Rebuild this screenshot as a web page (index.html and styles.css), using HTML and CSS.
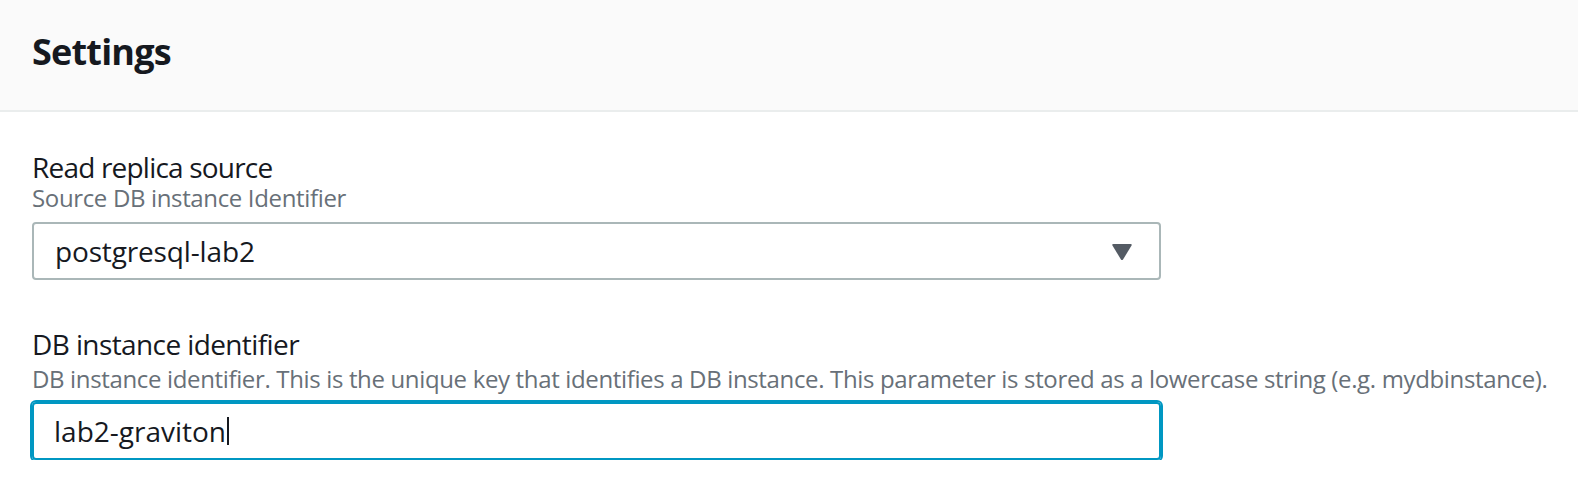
FILE: index.html
```html
<!DOCTYPE html>
<html lang="en">
<head>
<meta charset="utf-8">
<title>Settings</title>
<link rel="stylesheet" href="styles.css">
</head>
<body>
<section class="panel">
  <header class="panel-header">
    <h2 class="panel-title">Settings</h2>
  </header>
  <div class="panel-body">
    <div class="field field-first">
      <label class="field-label">Read replica source</label>
      <div class="field-desc">Source DB instance Identifier</div>
      <div class="select">
        <span class="select-value">postgresql-lab2</span>
        <svg class="caret" width="22" height="18" viewBox="0 0 22 18" aria-hidden="true">
          <path d="M2.5 1 H19.5 Q21.5 1 20.4 2.8 L12.2 16.2 Q11 18 9.8 16.2 L1.6 2.8 Q0.5 1 2.5 1 Z" fill="#545b64"/>
        </svg>
      </div>
    </div>
    <div class="field field-second">
      <label class="field-label">DB instance identifier</label>
      <div class="field-desc">DB instance identifier. This is the unique key that identifies a DB instance. This parameter is stored as a lowercase string (e.g. mydbinstance).</div>
      <div class="input input-focused">
        <span class="input-value">lab2-graviton</span><span class="text-cursor"></span>
      </div>
    </div>
  </div>
</section>
</body>
</html>
```
FILE: styles.css
```css
html, body {
  margin: 0;
  padding: 0;
  background: #ffffff;
}

body {
  font-family: "Open Sans", "Noto Sans", Arial, sans-serif;
  color: #16191f;
}

.panel {
  width: 100%;
}

.panel-header {
  background: #fafafa;
  border-bottom: 2px solid #eaeded;
  padding: 30px 32px 36px;
}

.panel-title {
  margin: 0;
  font-size: 36px;
  line-height: 44px;
  font-weight: 700;
  color: #16191f;
  letter-spacing: -0.8px;
}

.panel-body {
  padding: 0 32px;
  display: flex;
  flex-direction: column;
}

.field {
  display: flex;
  flex-direction: column;
  width: 1129px;
}

.field-first {
  padding-top: 39px;
}

.field-second {
  padding-top: 48px;
}

.field-label {
  font-size: 28px;
  line-height: 32px;
  color: #16191f;
  letter-spacing: -0.6px;
}

.field-first .field-label {
  letter-spacing: -0.8px;
}

.field-desc {
  font-size: 24px;
  line-height: 24px;
  color: #687078;
  white-space: nowrap;
  letter-spacing: -0.35px;
}

.field-first .field-desc {
  margin-top: 3px;
}

.field-second .field-desc {
  margin-top: 7px;
}

.select {
  margin-top: 12px;
  box-sizing: border-box;
  height: 58px;
  border: 2px solid #aab7b8;
  border-radius: 4px;
  display: flex;
  align-items: center;
  justify-content: space-between;
  padding: 0 26px 0 21px;
}

.select-value,
.input-value {
  font-size: 28px;
  line-height: 32px;
  color: #16191f;
}

.select-value {
  letter-spacing: -0.15px;
}

.input-value {
  letter-spacing: 0;
}

.caret {
  display: block;
  margin-top: 1px;
}

.input {
  margin-top: 11px;
  box-sizing: border-box;
  height: 58px;
  border: 2px solid #0097c2;
  border-radius: 4px;
  display: flex;
  align-items: center;
  padding: 0 20px;
}

.input-focused {
  box-shadow: 0 0 0 2px #0097c2;
}

.text-cursor {
  display: inline-block;
  width: 2px;
  height: 28px;
  background: #16191f;
  margin-left: 1px;
}
```
